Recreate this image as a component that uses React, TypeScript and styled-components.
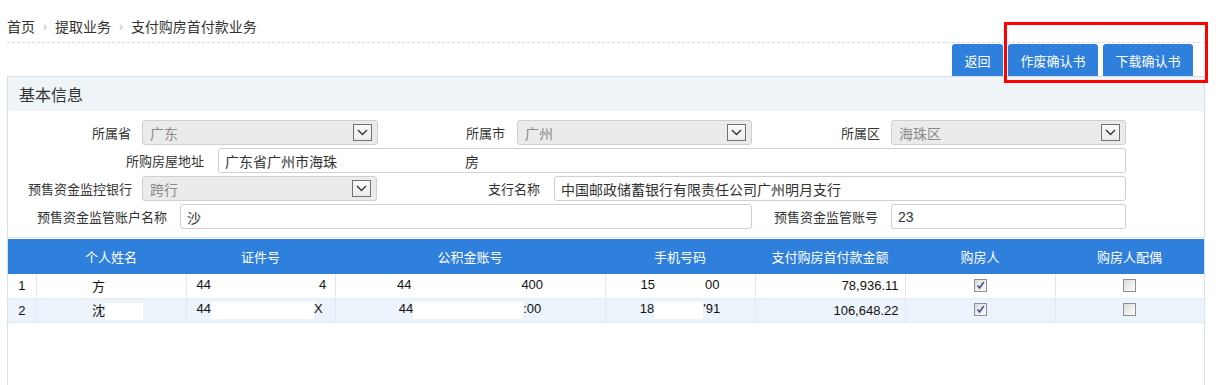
import React from "react";
import styled, { createGlobalStyle } from "styled-components";

const GlobalStyle = createGlobalStyle`
  html, body { margin: 0; padding: 0; background: #fff; }
  body {
    font-family: "Liberation Sans", "Noto Sans CJK SC", sans-serif;
    color: #333;
    overflow: hidden;
  }
  * { box-sizing: border-box; }
`;

const Page = styled.div`
  position: relative;
  width: 1219px;
  padding: 0 14px 0 7px;
`;

const Breadcrumb = styled.div`
  display: flex;
  align-items: center;
  height: 43px;
  padding-top: 16px;
  padding-bottom: 6px;
  font-family: "Noto Sans CJK SC", sans-serif;
  font-size: 14px;
  line-height: 20px;
  color: #333;
  border-bottom: 1px dashed #dcdcdc;
`;

const Crumb = styled.span`
  white-space: nowrap;
`;

const Sep = styled.span`
  color: #b0b0b0;
  font-size: 13px;
  margin: 0 8px;
`;

const Toolbar = styled.div`
  display: flex;
  justify-content: flex-end;
  gap: 5px;
  padding: 1px 12px 0 0;
  height: 33px;
`;

const Button = styled.button<{ $w: number }>`
  width: ${(p) => p.$w}px;
  height: 32px;
  border: none;
  border-radius: 3px 3px 0 0;
  background: #2f7fdc;
  color: #fff;
  font-family: "Noto Sans CJK SC", sans-serif;
  font-size: 13px;
  padding: 0;
  cursor: pointer;
`;

const Annotation = styled.div`
  position: absolute;
  left: 1004px;
  top: 22px;
  width: 204px;
  height: 61px;
  border: 3px solid #ff0000;
  pointer-events: none;
`;

const Panel = styled.section`
  border: 1px solid #d9dee4;
`;

const PanelHeader = styled.div`
  height: 34px;
  background: #eff4f9;
  display: flex;
  align-items: center;
  padding-left: 11px;
  font-family: "Noto Sans CJK SC", sans-serif;
  font-size: 16px;
  color: #333;
`;

const Form = styled.div`
  display: flex;
  flex-direction: column;
  gap: 3px;
  padding: 9px 0 8px;
`;

const Row = styled.div`
  display: flex;
  align-items: center;
  height: 25px;
`;

const Label = styled.label<{ $w: number; $gap: number }>`
  width: ${(p) => p.$w + p.$gap}px;
  padding-right: ${(p) => p.$gap}px;
  text-align: right;
  font-family: "Noto Sans CJK SC", sans-serif;
  font-size: 13px;
  color: #333;
  white-space: nowrap;
  flex: none;
`;

const Field = styled.div<{ $w: number; $disabled?: boolean }>`
  position: relative;
  width: ${(p) => p.$w}px;
  height: 25px;
  flex: none;
  display: flex;
  align-items: center;
  border: 1px solid #cfcfcf;
  border-radius: 3px;
  background: ${(p) => (p.$disabled ? "#ebebeb" : "#fff")};
  color: ${(p) => (p.$disabled ? "#8a8a8a" : "#333")};
  padding-left: ${(p) => (p.$disabled ? 7 : 6)}px;
  font-size: 14px;
  white-space: nowrap;
  overflow: hidden;
`;

const Arrow = styled.span`
  position: absolute;
  right: 5px;
  top: 3px;
  width: 19px;
  height: 17px;
  border: 1px solid #707070;
  background: linear-gradient(#fafafa, #ececec);
  display: flex;
  align-items: center;
  justify-content: center;
`;

const Spacer = styled.span<{ $w: number }>`
  display: inline-block;
  width: ${(p) => p.$w}px;
`;

const Grid = styled.div`
  margin-top: 1px;
  border: 1px solid #d3e3ef;
  border-top: none;
  height: 150px;
`;

const Table = styled.table`
  width: 1196px;
  border-collapse: collapse;
  table-layout: fixed;
`;

const Th = styled.th`
  height: 35px;
  background: #2f80dd;
  color: #fff;
  font-family: "Noto Sans CJK SC", sans-serif;
  font-size: 13px;
  font-weight: normal;
  text-align: center;
  padding: 0;
`;

const Tr = styled.tr<{ $alt?: boolean }>`
  background: ${(p) => (p.$alt ? "#edf3fa" : "#fff")};
  border-bottom: 1px solid #e2ecf5;
`;

const Td = styled.td<{ $align?: "left" | "center" | "right" }>`
  height: 24px;
  padding: 0 ${(p) => (p.$align === "right" ? 6 : p.$align === "left" ? 10 : 0)}px;
  border-right: 1px solid #dde9f3;
  text-align: ${(p) => p.$align || "center"};
  font-size: 13px;
  color: #111;
  white-space: nowrap;
  overflow: hidden;
  &:last-child { border-right: none; }
`;

const Mask = styled.span<{ $w: number; $mr?: number }>`
  display: inline-block;
  width: ${(p) => p.$w}px;
  height: 17px;
  margin-right: ${(p) => p.$mr || 0}px;
  background: #fff;
  vertical-align: middle;
`;

const Check = styled.span`
  display: inline-flex;
  align-items: center;
  justify-content: center;
  width: 13px;
  height: 13px;
  border: 1px solid #8e8f8f;
  background: linear-gradient(135deg, #dcdcdc, #fdfdfd);
  vertical-align: middle;
  margin-top: -3px;
`;

const ChevronDown = () => (
  <svg width="11" height="7" viewBox="0 0 11 7">
    <path d="M1 1 L5.5 5.5 L10 1" fill="none" stroke="#333" strokeWidth="1.4" />
  </svg>
);

const Select = ({ w, value }: { w: number; value: string }) => (
  <Field $w={w} $disabled>
    {value}
    <Arrow>
      <ChevronDown />
    </Arrow>
  </Field>
);

const CheckBox = ({ checked }: { checked?: boolean }) => (
  <Check>
    {checked && (
      <svg width="9" height="9" viewBox="0 0 9 9">
        <path d="M1.5 4.5 L3.6 7 L7.8 1" fill="none" stroke="#44528a" strokeWidth="1.6" />
      </svg>
    )}
  </Check>
);

const cols = [28, 150, 149, 270, 150, 150, 150, 149];
const heads = ["", "个人姓名", "证件号", "公积金账号", "手机号码", "支付购房首付款金额", "购房人", "购房人配偶"];

export default function App() {
  return (
    <Page>
      <GlobalStyle />
      <Breadcrumb>
        <Crumb>首页</Crumb>
        <Sep>›</Sep>
        <Crumb>提取业务</Crumb>
        <Sep>›</Sep>
        <Crumb>支付购房首付款业务</Crumb>
      </Breadcrumb>
      <Toolbar>
        <Button $w={51}>返回</Button>
        <Button $w={90}>作废确认书</Button>
        <Button $w={90}>下载确认书</Button>
      </Toolbar>
      <Panel>
        <PanelHeader>基本信息</PanelHeader>
        <Form>
          <Row>
            <Label $w={123} $gap={11}>所属省</Label>
            <Select w={236} value="广东" />
            <Label $w={127} $gap={12}>所属市</Label>
            <Select w={235} value="广州" />
            <Label $w={128} $gap={11}>所属区</Label>
            <Select w={235} value="海珠区" />
          </Row>
          <Row>
            <Label $w={196} $gap={14}>所购房屋地址</Label>
            <Field $w={908}>
              广东省广州市海珠
              <Spacer $w={128} />房
            </Field>
          </Row>
          <Row>
            <Label $w={124} $gap={10}>预售资金监控银行</Label>
            <Select w={235} value="跨行" />
            <Label $w={163} $gap={14}>支行名称</Label>
            <Field $w={572}>中国邮政储蓄银行有限责任公司广州明月支行</Field>
          </Row>
          <Row>
            <Label $w={159} $gap={13}>预售资金监管账户名称</Label>
            <Field $w={572}>沙</Field>
            <Label $w={126} $gap={13}>预售资金监管账号</Label>
            <Field $w={235}>23</Field>
          </Row>
        </Form>
      </Panel>
      <Grid>
        <Table>
          <colgroup>
            {cols.map((w, i) => (
              <col key={i} style={{ width: w }} />
            ))}
          </colgroup>
          <thead>
            <tr>
              {heads.map((h, i) => (
                <Th key={i}>{h}</Th>
              ))}
            </tr>
          </thead>
          <tbody>
            <Tr>
              <Td>1</Td>
              <Td>
                方<Mask $w={38} $mr={-13} />
              </Td>
              <Td $align="left">
                44<Mask $w={108} />4
              </Td>
              <Td>
                44<Mask $w={110} />400
              </Td>
              <Td>
                15<Mask $w={50} />00
              </Td>
              <Td $align="right">78,936.11</Td>
              <Td>
                <CheckBox checked />
              </Td>
              <Td>
                <CheckBox />
              </Td>
            </Tr>
            <Tr $alt>
              <Td>2</Td>
              <Td>
                沈<Mask $w={38} $mr={-13} />
              </Td>
              <Td $align="left">
                44<Mask $w={103} />X
              </Td>
              <Td>
                44<Mask $w={110} />:00
              </Td>
              <Td>
                18<Mask $w={49} />'91
              </Td>
              <Td $align="right">106,648.22</Td>
              <Td>
                <CheckBox checked />
              </Td>
              <Td>
                <CheckBox />
              </Td>
            </Tr>
          </tbody>
        </Table>
      </Grid>
      <Annotation />
    </Page>
  );
}
